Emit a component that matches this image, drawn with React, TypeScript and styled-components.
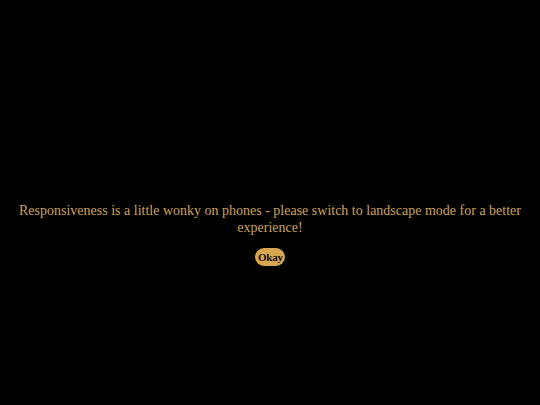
import React from 'react';
import styled, { createGlobalStyle } from 'styled-components';

const GlobalStyle = createGlobalStyle`
  html, body {
    margin: 0;
    padding: 0;
    background: #000;
  }
`;

const Screen = styled.div`
  box-sizing: border-box;
  height: 100vh;
  padding: 63px 16px 0;
  display: flex;
  flex-direction: column;
  align-items: center;
  justify-content: center;
  gap: 12px;
  background: #000;
  font-family: 'Liberation Serif', 'DejaVu Serif', serif;
`;

const Message = styled.p`
  margin: 0;
  max-width: 510px;
  text-align: center;
  color: #c9a35e;
  font-size: 14px;
  line-height: 17px;
`;

const OkayButton = styled.button`
  border: none;
  border-radius: 9px;
  padding: 0 3px;
  width: 30px;
  height: 18px;
  background: #d6a74f;
  color: #111;
  font-family: inherit;
  font-size: 11px;
  font-weight: 700;
  letter-spacing: -0.2px;
  cursor: pointer;
`;

export default function App() {
  return (
    <>
      <GlobalStyle />
      <Screen>
        <Message>
          Responsiveness is a little wonky on phones - please switch to landscape mode for a better experience!
        </Message>
        <OkayButton>Okay</OkayButton>
      </Screen>
    </>
  );
}
